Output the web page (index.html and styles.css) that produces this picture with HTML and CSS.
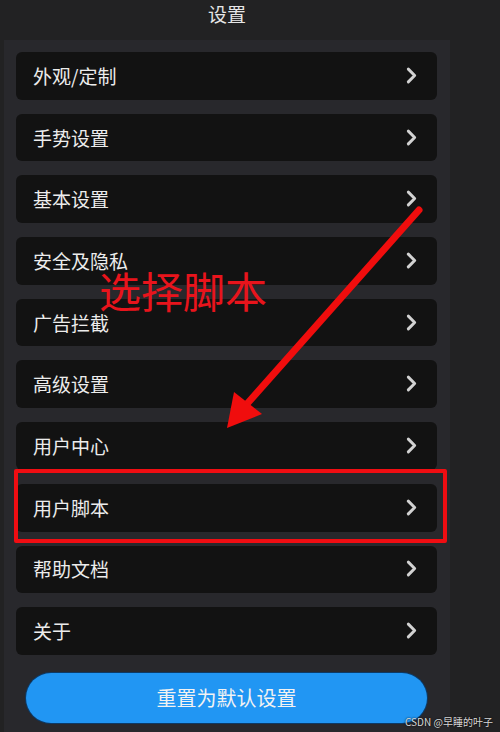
FILE: index.html
```html
<!DOCTYPE html>
<html lang="zh">
<head>
<meta charset="utf-8">
<link rel="stylesheet" href="styles.css">
</head>
<body>
<div class="page">
  <header class="title">设置</header>
  <section class="panel">
    <div class="list">
      <div class="row"><span>外观/定制</span><svg class="chev" viewBox="0 0 12 18"><path d="M3 3l6 6-6 6"/></svg></div>
      <div class="row"><span>手势设置</span><svg class="chev" viewBox="0 0 12 18"><path d="M3 3l6 6-6 6"/></svg></div>
      <div class="row"><span>基本设置</span><svg class="chev" viewBox="0 0 12 18"><path d="M3 3l6 6-6 6"/></svg></div>
      <div class="row"><span>安全及隐私</span><svg class="chev" viewBox="0 0 12 18"><path d="M3 3l6 6-6 6"/></svg></div>
      <div class="row"><span>广告拦截</span><svg class="chev" viewBox="0 0 12 18"><path d="M3 3l6 6-6 6"/></svg></div>
      <div class="row"><span>高级设置</span><svg class="chev" viewBox="0 0 12 18"><path d="M3 3l6 6-6 6"/></svg></div>
      <div class="row"><span>用户中心</span><svg class="chev" viewBox="0 0 12 18"><path d="M3 3l6 6-6 6"/></svg></div>
      <div class="row"><span>用户脚本</span><svg class="chev" viewBox="0 0 12 18"><path d="M3 3l6 6-6 6"/></svg></div>
      <div class="row"><span>帮助文档</span><svg class="chev" viewBox="0 0 12 18"><path d="M3 3l6 6-6 6"/></svg></div>
      <div class="row"><span>关于</span><svg class="chev" viewBox="0 0 12 18"><path d="M3 3l6 6-6 6"/></svg></div>
    </div>
    <button class="reset">重置为默认设置</button>
  </section>
</div>
<svg class="arrow" viewBox="0 0 500 732" width="500" height="732">
  <line x1="419" y1="210" x2="246" y2="405" stroke="#f00d0d" stroke-width="7" stroke-linecap="round"/>
  <polygon points="227,428 234,392 262,414" fill="#f00d0d"/>
</svg>
<div class="note">选择脚本</div>
<div class="highlight"></div>
<div class="watermark">CSDN @早睡的叶子</div>
</body>
</html>
```
FILE: styles.css
```css
* { box-sizing: border-box; }
html, body { margin: 0; padding: 0; }
body {
  width: 500px;
  height: 732px;
  overflow: hidden;
  background: #222223;
  font-family: "Noto Sans CJK SC", "Noto Sans", sans-serif;
  position: relative;
}
.page {
  width: 446px;
  margin-left: 4px;
  display: flex;
  flex-direction: column;
  height: 732px;
}
.title {
  height: 40px;
  display: flex;
  align-items: flex-start;
  justify-content: center;
  padding-top: 0;
  color: #e6e6e6;
  font-size: 19px;
  line-height: 27px;
}
.panel {
  flex: 1;
  background: #28282c;
  padding: 12px 13px 0 12px;
}
.list {
  display: flex;
  flex-direction: column;
  gap: 14px;
}
.row {
  height: 47.7px;
  background: #121212;
  border-radius: 6px;
  display: flex;
  align-items: center;
  justify-content: space-between;
  padding: 0 19px 1px 17px;
  color: #ececec;
  font-size: 19px;
}
.chev {
  width: 13px;
  height: 19px;
  fill: none;
  stroke: #d2d2d2;
  stroke-width: 2.8;
  stroke-linecap: round;
  stroke-linejoin: round;
}
.reset {
  display: block;
  margin: 18px 0 0 10px;
  width: 401px;
  height: 50px;
  padding: 0;
  border: none;
  border-radius: 25px;
  background: #2196f3;
  color: #f2f2f2;
  font-family: "Noto Sans CJK SC", "Noto Sans", sans-serif;
  font-size: 20px;
  box-shadow: 0 0 0 1px #0d3a66;
}
.arrow {
  position: absolute;
  left: 0;
  top: 0;
  pointer-events: none;
}
.note {
  position: absolute;
  left: 99px;
  top: 269px;
  color: #e8141c;
  font-size: 42px;
  font-weight: 400;
  line-height: 42px;
}
.highlight {
  position: absolute;
  left: 14px;
  top: 469px;
  width: 433px;
  height: 74px;
  border: 4px solid #f00d12;
  border-radius: 2px;
}
.watermark {
  position: absolute;
  left: 405px;
  top: 714px;
  font-size: 10px;
  color: #d8d8d8;
  text-shadow: 0 0 2px #000;
  white-space: nowrap;
}
```
